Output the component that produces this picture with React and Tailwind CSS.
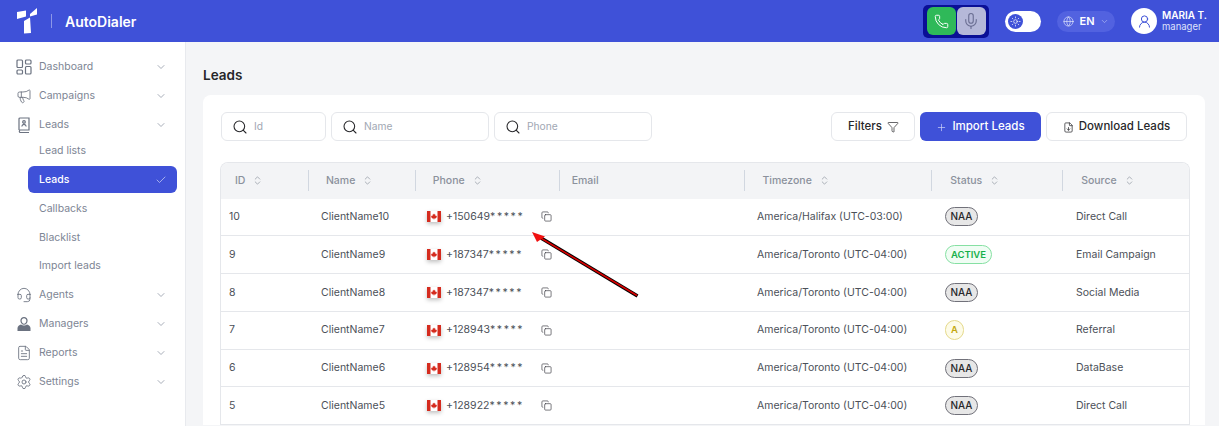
import { Megaphone, Headset, FileText, Settings, ChevronDown, Check, Search, Funnel, Plus, FileDown, Phone, Mic, Globe, UserRound, ChevronsUpDown, Copy, Sun } from 'lucide-react';

const leads = [
  { id: 10, name: 'ClientName10', phone: '+150649', tz: 'America/Halifax (UTC-03:00)', status: 'NAA', source: 'Direct Call' },
  { id: 9, name: 'ClientName9', phone: '+187347', tz: 'America/Toronto (UTC-04:00)', status: 'ACTIVE', source: 'Email Campaign' },
  { id: 8, name: 'ClientName8', phone: '+187347', tz: 'America/Toronto (UTC-04:00)', status: 'NAA', source: 'Social Media' },
  { id: 7, name: 'ClientName7', phone: '+128943', tz: 'America/Toronto (UTC-04:00)', status: 'A', source: 'Referral' },
  { id: 6, name: 'ClientName6', phone: '+128954', tz: 'America/Toronto (UTC-04:00)', status: 'NAA', source: 'DataBase' },
  { id: 5, name: 'ClientName5', phone: '+128922', tz: 'America/Toronto (UTC-04:00)', status: 'NAA', source: 'Direct Call' },
];

const columns = [
  { label: 'ID', cls: 'w-[88px] pl-[14px]', sort: true },
  { label: 'Name', cls: 'w-[107px] pl-[17px]', sort: true },
  { label: 'Phone', cls: 'w-[144px] pl-[17px]', sort: true },
  { label: 'Email', cls: 'w-[186px] pl-[12px]' },
  { label: 'Timezone', cls: 'w-[187px] pl-[17px]', sort: true },
  { label: 'Status', cls: 'w-[131px] pl-[18px]', sort: true },
  { label: 'Source', cls: 'w-[126px] pl-[18px]', sort: true },
];

function GridIcon() {
  return (
    <svg width="16" height="16" viewBox="0 0 16 16" fill="none" stroke="#6b7280" strokeWidth="1.2">
      <rect x="1" y="1" width="5.5" height="7.5" rx="1" />
      <rect x="9.5" y="1" width="5.5" height="4" rx="1" />
      <rect x="1" y="11" width="5.5" height="4" rx="1" />
      <rect x="9.5" y="7.5" width="5.5" height="7.5" rx="1" />
    </svg>
  );
}

function ContactBook() {
  return (
    <svg width="16" height="16" viewBox="0 0 16 16" fill="none" stroke="#6b7280" strokeWidth="1.2">
      <path d="M3 13V2a1 1 0 0 1 1-1h9v12H4.2a1.4 1.4 0 0 0 0 2.6H13" />
      <path d="M5.8 9.5c.3-2.8 4-2.8 4.4 0M8 6.2a1.3 1.3 0 1 0 0-2.6 1.3 1.3 0 0 0 0 2.600z" />
    </svg>
  );
}

function SolidUser() {
  return (
    <svg width="16" height="16" viewBox="0 0 16 16" fill="#6b7280">
      <path d="M8 1a3.6 3.6 0 0 1 3.6 3.8c0 2.2-1.6 4-3.6 4S4.400 7 4.400 4.800A3.600 3.600 0 0 1 8 1zm0 1.200c-1.400 0-2.400 1.100-2.400 2.600S6.700 7.700 8 7.700s2.400-1.400 2.400-2.900S9.400 2.200 8 2.200z" />
      <path d="M5 8.600c1.600 1.300 4.400 1.300 6 0 1.800.6 3.300 1.900 3.500 3.400v3H1.500v-3C1.700 10.500 3.200 9.200 5 8.600z" />
    </svg>
  );
}

function NavRow({ icon, label }) {
  return (
    <div className="flex h-[29px] items-center pl-4 pr-[18px] text-[#7d8594]">
      <span className="flex w-[23px] shrink-0">{icon}</span>
      <span className="flex-1 text-[10.5px]">{label}</span>
      <ChevronDown size={12} strokeWidth={1.5} className="text-[#8b93a1]" />
    </div>
  );
}

function SubRow({ label, height = 'h-[29px]' }) {
  return <div className={`${height} flex items-center pl-[39px] text-[10.5px] text-[#7d8594]`}>{label}</div>;
}

function SearchBox({ width, placeholder }) {
  return (
    <div className={`${width} flex h-[29px] items-center gap-[6px] rounded-md border border-[#e5e7eb] bg-white pl-[10px]`}>
      <Search size={16} strokeWidth={1.6} className="text-[#27272a]" />
      <span className="text-[10.25px] text-[#a1a7b3]">{placeholder}</span>
    </div>
  );
}

function StatusBadge({ status }) {
  if (status === 'ACTIVE') {
    return <span className="flex h-[19px] w-[47px] items-center justify-center rounded-full border border-[#86e0a3] bg-[#f0fdf4] text-[9.5px] font-semibold text-[#16b04a]">ACTIVE</span>;
  }
  if (status === 'A') {
    return <span className="flex h-[20px] w-[19px] items-center justify-center rounded-full border border-[#e5d98a] bg-[#fdfbe8] text-[9.5px] font-semibold text-[#c4a80f]">A</span>;
  }
  return <span className="flex h-[19px] w-[33px] items-center justify-center rounded-full border border-[#71717a] bg-[#e7e7e7] text-[10px] font-medium text-[#27272a]">NAA</span>;
}

function CanadaFlag() {
  return (
    <svg width="14" height="11" viewBox="0 0 14 11" className="shadow-[0_2px_4px_rgba(0,0,0,0.25)]">
      <rect width="14" height="11" fill="#fff" />
      <rect width="3.500" height="11" fill="#d52b1e" />
      <rect x="10.500" width="3.500" height="11" fill="#d52b1e" />
      <path d="M7 2.500l.6 1.100.7-.3-.2 1.600.8-.6.300.6.800-.1-.4 1.200.3.200-1.400 1-.1.600L7.200 7.500v1.200h-.4V7.500L5.600 7.800l-.1-.6-1.400-1 .3-.2-.4-1.200.8.100.3-.6.800.6-.2-1.600.7.3z" fill="#d52b1e" />
    </svg>
  );
}

export default function App() {
  return (
    <div className="relative h-[426px] w-[1219px] overflow-hidden bg-[#f4f5f7] font-['Inter',sans-serif]">
      <header className="flex h-[42px] items-center bg-[#3f51d8] pr-[11px] text-white">
        <svg width="22" height="26" viewBox="0 0 22 26" className="ml-[16px]" fill="#fff">
          <path d="M1 4L10 2.500V8.500L1 11z" />
          <path d="M14 6L21 0V6.500L14 8.500z" />
          <path d="M8 13L14 9.500L15 25L8 25.500z" />
        </svg>
        <div className="ml-[13px] h-[14px] w-px bg-[#8c97e8]" />
        <span className="ml-[13px] text-[14px] font-semibold">AutoDialer</span>
        <div className="ml-auto flex items-center">
          <div className="flex h-[33px] w-[66px] items-center justify-center gap-px rounded-[5px] bg-[#0a0f96]">
            <div className="flex h-[28px] w-[29px] items-center justify-center rounded-md bg-[#2fb959]">
              <Phone size={15} strokeWidth={1.6} />
            </div>
            <div className="flex h-[28px] w-[29px] items-center justify-center rounded-md bg-[#b5b8d9]">
              <Mic size={18} strokeWidth={1.5} className="text-[#6a6e92]" />
            </div>
          </div>
          <div className="ml-4 flex h-[21px] w-[36px] items-center rounded-full bg-white pl-[3px]">
            <div className="flex h-[15px] w-[15px] items-center justify-center rounded-full bg-[#3f51d8]">
              <Sun size={11} strokeWidth={1.5} />
            </div>
          </div>
          <div className="ml-4 flex h-[21px] w-[58px] items-center justify-center gap-[5px] rounded-full bg-[#5262e0]">
            <Globe size={11} strokeWidth={1.5} className="text-[#dfe3fb]" />
            <span className="text-[11px] font-semibold">EN</span>
            <ChevronDown size={9} className="text-[#aab3f0]" />
          </div>
          <div className="ml-4 flex h-[26px] w-[26px] items-center justify-center rounded-full bg-white">
            <UserRound size={15} strokeWidth={1.6} className="text-[#3f51d8]" />
          </div>
          <div className="ml-[5px] flex w-[46px] flex-col text-[10px] leading-[12px]">
            <span className="font-semibold">MARIA T.</span>
            <span className="text-[9.5px] text-[#dfe3fb]">manager</span>
          </div>
        </div>
      </header>

      <div className="flex">
        <aside className="h-[384px] w-[186px] shrink-0 border-r border-[#e8eaee] bg-white pt-[10px]">
          <NavRow icon={<GridIcon />} label="Dashboard" />
          <NavRow icon={<Megaphone size={16} strokeWidth={1.3} className="text-[#6b7280]" />} label="Campaigns" />
          <NavRow icon={<ContactBook />} label="Leads" />
          <SubRow label="Lead lists" height="h-[23px]" />
          <div className="mb-px ml-7 mr-2 mt-1 flex h-[27px] items-center justify-between rounded-md bg-[#3f51d8] pl-[11px] pr-[10px] text-[10.5px] font-medium text-white">
            Leads
            <Check size={12} strokeWidth={1.5} className="text-[#c7cdf3]" />
          </div>
          <SubRow label="Callbacks" />
          <SubRow label="Blacklist" />
          <SubRow label="Import leads" height="h-[28px]" />
          <NavRow icon={<Headset size={16} strokeWidth={1.3} className="text-[#6b7280]" />} label="Agents" />
          <NavRow icon={<SolidUser />} label="Managers" />
          <NavRow icon={<FileText size={16} strokeWidth={1.3} className="text-[#6b7280]" />} label="Reports" />
          <NavRow icon={<Settings size={16} strokeWidth={1.3} className="text-[#6b7280]" />} label="Settings" />
        </aside>

        <main className="min-w-0 flex-1 pl-[17px] pr-[14px]">
          <h1 className="flex h-[53px] items-center pt-[14px] text-[13.5px] font-semibold text-[#27272a]">Leads</h1>
          <div className="rounded-t-lg bg-white pl-[18px] pr-[17px] pt-[17px]">
            <div className="flex items-center">
              <SearchBox width="w-[105px]" placeholder="Id" />
              <div className="w-[5px]" />
              <SearchBox width="w-[158px]" placeholder="Name" />
              <div className="w-[5px]" />
              <SearchBox width="w-[158px]" placeholder="Phone" />
              <div className="ml-auto flex items-center gap-[5px] pr-[1px]">
                <button className="flex h-[29px] w-[84px] items-center justify-center gap-[5px] rounded-md border border-[#e5e7eb] bg-white pl-px pt-px text-[11.5px] font-medium text-[#27272a]">
                  Filters <Funnel size={12} strokeWidth={1.4} />
                </button>
                <button className="flex h-[29px] w-[121px] items-center justify-center gap-[5px] rounded-md bg-[#3f51d8] pt-px text-[11.5px] font-medium text-white">
                  <Plus size={11} strokeWidth={1.5} className="text-[#cfd4f7]" /> Import Leads
                </button>
                <button className="flex h-[29px] w-[141px] items-center justify-center gap-[5px] rounded-md border border-[#e5e7eb] bg-white pt-px text-[11.5px] font-medium text-[#27272a]">
                  <FileDown size={11} strokeWidth={1.6} /> Download Leads
                </button>
              </div>
            </div>

            <div className="-ml-px mt-[21px] w-[970px] overflow-hidden rounded-t-lg border border-b-0 border-[#e5e7eb]">
              <div className="flex h-[35.5px] items-center bg-[#f3f4f6]">
                {columns.map((col, i) => (
                  <div key={col.label} className={`${col.cls} flex h-[21px] items-center gap-[7px] text-[10.5px] font-medium text-[#8b919c] ${i < columns.length - 1 ? 'border-r border-[#d1d7e0]' : ''}`}>
                    {col.label}
                    {col.sort && <ChevronsUpDown size={11} strokeWidth={1.5} />}
                  </div>
                ))}
              </div>
              {leads.map((lead) => (
                <div key={lead.id} className="flex h-[37.8px] items-center border-b border-[#e5e7eb] text-[10.5px] text-[#4b5058]">
                  <div className="w-[100px] shrink-0 pl-[8px]">{lead.id}</div>
                  <div className="w-[106px] shrink-0">{lead.name}</div>
                  <div className="flex w-[330px] shrink-0 items-center">
                    <CanadaFlag />
                    <span className="ml-[5px] w-[95px]">{lead.phone}<span className="tracking-[1.6px]">*****</span></span>
                    <Copy size={11} strokeWidth={1.5} className="text-[#3f3f46]" />
                  </div>
                  <div className="w-[188px] shrink-0">{lead.tz}</div>
                  <div className="w-[131px] shrink-0"><StatusBadge status={lead.status} /></div>
                  <div>{lead.source}</div>
                </div>
              ))}
            </div>
          </div>
        </main>
      </div>

      <svg width="120" height="80" viewBox="0 0 120 80" className="absolute left-[525px] top-[225px]">
        <path d="M16 13 L112.500 71" stroke="#000" strokeWidth="3.500" />
        <path d="M14 12 L112 70.500" stroke="#d80000" strokeWidth="1.600" />
        <path d="M7 7 L20 11.500 L12 17z" fill="#f01010" />
      </svg>
    </div>
  );
}
